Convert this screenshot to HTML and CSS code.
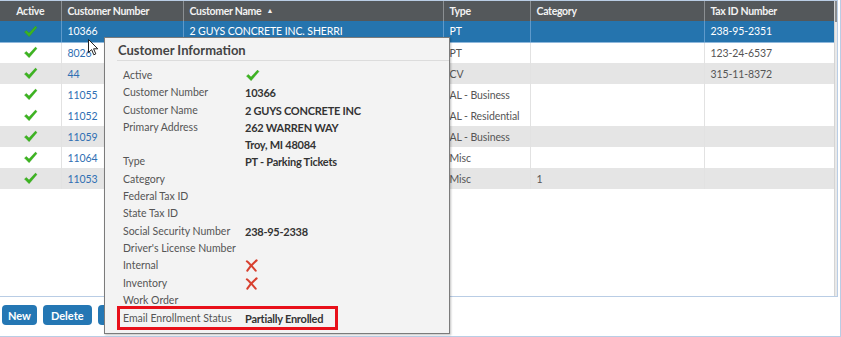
FILE: index.html
```html
<!DOCTYPE html>
<html>
	<head>
		<meta charset="UTF-8">
		<title>Customers</title>
		<link rel="stylesheet" href="styles.css">
	</head>
	<body>
		<div class="page">
			<div class="grid">
				<div class="grid-main">
					<table class="table">
						<colgroup>
							<col style="width:61px">
							<col style="width:122px">
							<col style="width:260px">
							<col style="width:87px">
							<col style="width:174px">
							<col style="width:130px">
						</colgroup>
						<thead>
							<tr>
								<th class="center">Active</th>
								<th>Customer Number</th>
								<th>Customer Name <span class="sort">&#9650;</span></th>
								<th>Type</th>
								<th>Category</th>
								<th>Tax ID Number</th>
							</tr>
						</thead>
						<tbody>
							<tr class="selected">
								<td class="center"><svg class="check" viewBox="0 0 16 14"><path d="M1.5 7.6 L3.6 5.8 L6.4 8.6 L13.4 1.2 L15 2.8 L6.5 12.6 Z"/></svg></td>
								<td><a>10366</a></td>
								<td>2 GUYS CONCRETE INC. SHERRI</td>
								<td>PT</td>
								<td></td>
								<td>238-95-2351</td>
							</tr>
							<tr>
								<td class="center"><svg class="check" viewBox="0 0 16 14"><path d="M1.5 7.6 L3.6 5.8 L6.4 8.6 L13.4 1.2 L15 2.8 L6.5 12.6 Z"/></svg></td>
								<td><a>8026</a></td>
								<td></td>
								<td>PT</td>
								<td></td>
								<td>123-24-6537</td>
							</tr>
							<tr class="alt">
								<td class="center"><svg class="check" viewBox="0 0 16 14"><path d="M1.5 7.6 L3.6 5.8 L6.4 8.6 L13.4 1.2 L15 2.8 L6.5 12.6 Z"/></svg></td>
								<td><a>44</a></td>
								<td></td>
								<td>CV</td>
								<td></td>
								<td>315-11-8372</td>
							</tr>
							<tr>
								<td class="center"><svg class="check" viewBox="0 0 16 14"><path d="M1.5 7.6 L3.6 5.8 L6.4 8.6 L13.4 1.2 L15 2.8 L6.5 12.6 Z"/></svg></td>
								<td><a>11055</a></td>
								<td></td>
								<td>AL - Business</td>
								<td></td>
								<td></td>
							</tr>
							<tr>
								<td class="center"><svg class="check" viewBox="0 0 16 14"><path d="M1.5 7.6 L3.6 5.8 L6.4 8.6 L13.4 1.2 L15 2.8 L6.5 12.6 Z"/></svg></td>
								<td><a>11052</a></td>
								<td></td>
								<td>AL - Residential</td>
								<td></td>
								<td></td>
							</tr>
							<tr class="alt">
								<td class="center"><svg class="check" viewBox="0 0 16 14"><path d="M1.5 7.6 L3.6 5.8 L6.4 8.6 L13.4 1.2 L15 2.8 L6.5 12.6 Z"/></svg></td>
								<td><a>11059</a></td>
								<td></td>
								<td>AL - Business</td>
								<td></td>
								<td></td>
							</tr>
							<tr>
								<td class="center"><svg class="check" viewBox="0 0 16 14"><path d="M1.5 7.6 L3.6 5.8 L6.4 8.6 L13.4 1.2 L15 2.8 L6.5 12.6 Z"/></svg></td>
								<td><a>11064</a></td>
								<td></td>
								<td>Misc</td>
								<td></td>
								<td></td>
							</tr>
							<tr class="alt">
								<td class="center"><svg class="check" viewBox="0 0 16 14"><path d="M1.5 7.6 L3.6 5.8 L6.4 8.6 L13.4 1.2 L15 2.8 L6.5 12.6 Z"/></svg></td>
								<td><a>11053</a></td>
								<td></td>
								<td>Misc</td>
								<td>1</td>
								<td></td>
							</tr>
						</tbody>
					</table>
				</div>
				<div class="scrollbar"><div class="thumb"></div></div>
			</div>
			<div class="toolbar">
				<button class="btn btn-new">New</button>
				<button class="btn btn-delete">Delete</button>
				<button class="btn">Edit</button>
			</div>

			<div class="popup">
				<div class="popup-title">Customer Information</div>
				<div class="info">
					<div class="info-row"><span class="label">Active</span><span class="value"><svg class="check" viewBox="0 0 16 14"><path d="M1.5 7.6 L3.6 5.8 L6.4 8.6 L13.4 1.2 L15 2.8 L6.5 12.6 Z"/></svg></span></div>
					<div class="info-row"><span class="label">Customer Number</span><span class="value">10366</span></div>
					<div class="info-row"><span class="label">Customer Name</span><span class="value">2 GUYS CONCRETE INC</span></div>
					<div class="info-row"><span class="label">Primary Address</span><span class="value">262 WARREN WAY<br>Troy, MI 48084</span></div>
					<div class="info-row"><span class="label">Type</span><span class="value">PT - Parking Tickets</span></div>
					<div class="info-row"><span class="label">Category</span><span class="value"></span></div>
					<div class="info-row"><span class="label">Federal Tax ID</span><span class="value"></span></div>
					<div class="info-row"><span class="label">State Tax ID</span><span class="value"></span></div>
					<div class="info-row"><span class="label">Social Security Number</span><span class="value">238-95-2338</span></div>
					<div class="info-row"><span class="label">Driver's License Number</span><span class="value"></span></div>
					<div class="info-row"><span class="label">Internal</span><span class="value"><svg class="cross" viewBox="0 0 14 14"><path d="M2 2.5 C5 5 8 8.5 11.5 12.5"/><path d="M12.5 1.5 C9 4.5 5.5 8 2.5 12.5"/></svg></span></div>
					<div class="info-row"><span class="label">Inventory</span><span class="value"><svg class="cross" viewBox="0 0 14 14"><path d="M2 2.5 C5 5 8 8.5 11.5 12.5"/><path d="M12.5 1.5 C9 4.5 5.5 8 2.5 12.5"/></svg></span></div>
					<div class="info-row"><span class="label">Work Order</span><span class="value"></span></div>
					<div class="info-row marked"><span class="label">Email Enrollment Status</span><span class="value">Partially Enrolled</span></div>
				</div>
			</div>

			<svg class="cursor" viewBox="0 0 12 18"><path d="M0.5 0.5 L0.5 13.5 L3.6 10.6 L5.8 15.8 L7.8 14.9 L5.6 9.8 L9.8 9.8 Z"/></svg>
		</div>
	</body>
</html>
```

FILE: styles.css
```css
* {
	box-sizing: border-box;
}
body {
	margin: 0;
	font-family: "Lato", "Open Sans", sans-serif;
	background: #fff;
}
.page {
	position: relative;
	width: 841px;
	height: 337px;
	border-right: 1px solid #b9cde5;
	border-bottom: 1px solid #b9cde5;
}
.grid {
	display: flex;
	width: 838px;
	height: 297px;
	border: 1px solid #b9cde5;
	border-left: 0;
}
.grid-main {
	flex: 1;
}
.scrollbar {
	width: 3px;
	background: #e9e9e9;
	border-left: 1px solid #d4d4d4;
}
.thumb {
	height: 21px;
	background: #8a8d90;
}
.table {
	border-collapse: collapse;
	table-layout: fixed;
	width: 834px;
	font-size: 10.5px;
	letter-spacing: -0.1px;
}
.table th {
	height: 20px;
	padding: 0 6px;
	background: #54585b;
	color: #f2f2f2;
	font-size: 10.5px;
	font-weight: bold;
	letter-spacing: -0.3px;
	text-align: left;
	border-left: 1px solid #8b8f92;
	white-space: nowrap;
}
.table th:first-child {
	border-left: 0;
}
.table td {
	height: 21px;
	padding: 0 6px;
	color: #555;
	border-left: 1px solid #e2e2e2;
	white-space: nowrap;
	overflow: hidden;
}
.table td:first-child {
	border-left: 0;
}
.center {
	text-align: center;
}
.table th.center {
	text-align: center;
}
.sort {
	font-size: 7px;
	vertical-align: 2px;
	margin-left: 3px;
}
.table a {
	color: #2f6fb3;
}
.alt td {
	background: #e5e5e5;
}
.selected td {
	background: #2574ae;
	color: #fff;
	border-left-color: #5f9acb;
	border-bottom: 1px solid #8fb8dc;
}
.selected a {
	color: #fff;
}
.check {
	width: 15px;
	height: 13px;
	vertical-align: -2px;
}
.check path {
	fill: #3cb420;
	stroke: #2f9a17;
	stroke-width: 0.4;
}
.cross {
	width: 13px;
	height: 13px;
	vertical-align: -2px;
}
.cross path {
	fill: none;
	stroke: #d8402f;
	stroke-width: 2.2;
	stroke-linecap: round;
}
.toolbar {
	display: flex;
	gap: 6px;
	padding: 8px 0 0 2px;
}
.btn {
	height: 20px;
	padding: 0 6px;
	border: 0;
	border-radius: 4px;
	background: #2477b4;
	color: #fff;
	font-family: "Lato", "Open Sans", sans-serif;
	font-weight: bold;
	font-size: 11px;
}
.btn-delete {
	padding: 0 8px;
}
.popup {
	position: absolute;
	left: 104px;
	top: 37px;
	width: 346px;
	height: 297px;
	background: #f3f3f3;
	border: 1px solid #7b7b7b;
	box-shadow: 1px 1px 2px rgba(0, 0, 0, 0.25);
	color: #555;
	font-size: 11px;
}
.popup-title {
	margin: 0 0 0 12px;
	padding: 4px 0 3px 1px;
	height: 23px;
	border-bottom: 1px solid #dcdcdc;
	color: #444;
	font-weight: bold;
	font-size: 13px;
}
.info {
	padding: 6px 0 0 18px;
}
.info-row {
	display: flex;
	line-height: 17.3px;
}
.label {
	width: 122px;
	flex: none;
	font-size: 10.5px;
	white-space: nowrap;
}
.value {
	color: #333;
	font-weight: bold;
	letter-spacing: -0.25px;
	white-space: nowrap;
}
.marked {
	width: 221px;
	margin: -3px 0 0 -6px;
	padding: 1px 0 0 3px;
	border: 3px solid #e8101a;
}
.cursor {
	position: absolute;
	left: 88px;
	top: 39px;
	width: 12px;
	height: 18px;
}
.cursor path {
	fill: #fff;
	stroke: #222;
	stroke-width: 1;
}
```
